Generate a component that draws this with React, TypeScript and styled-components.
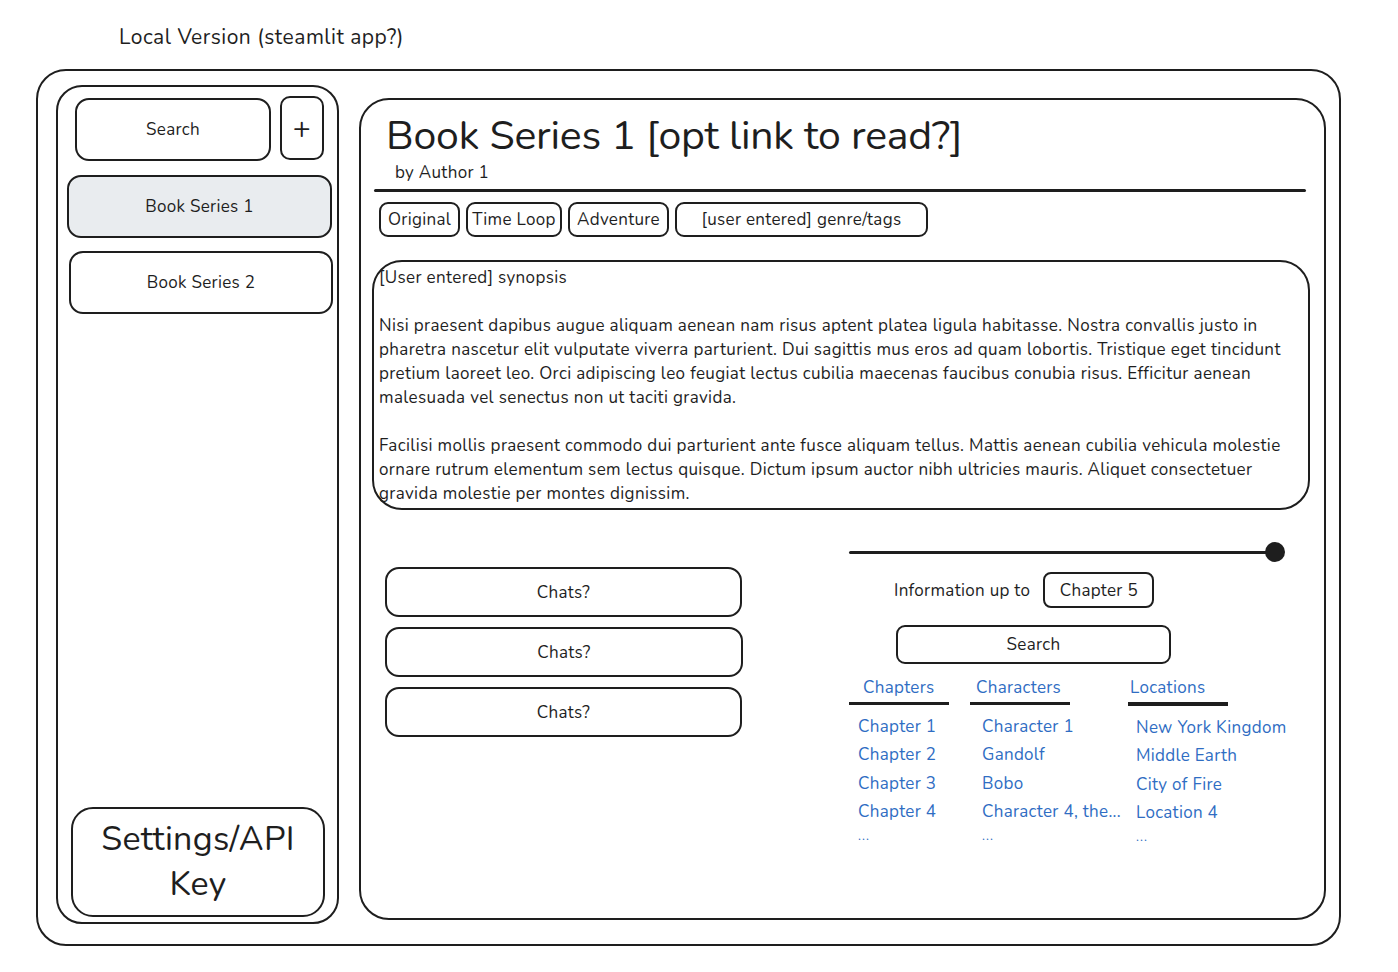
import React from "react";
import styled, { createGlobalStyle } from "styled-components";

const FONT = `"Nunito", "Noto Sans", "Open Sans", sans-serif`;
const INK = "#1e1e1e";
const BLUE = "#2f6dc3";

const Global = createGlobalStyle`
  html, body { margin: 0; padding: 0; background: #ffffff; }
  body { font-family: ${FONT}; color: ${INK}; letter-spacing: 0.3px; }
  * { box-sizing: border-box; }
`;

const Page = styled.div`
  width: 1398px;
  height: 972px;
  padding: 22px 0 0 36px;
  display: flex;
  flex-direction: column;
`;

const PageTitle = styled.div`
  margin-left: 83px;
  font-size: 21px;
  line-height: 30px;
  letter-spacing: 0.5px;
`;

const Frame = styled.div`
  margin-top: 17px;
  width: 1305px;
  height: 877px;
  border: 2px solid ${INK};
  border-radius: 30px;
  display: flex;
  align-items: flex-start;
`;

const Sidebar = styled.div`
  margin: 14px 0 0 18px;
  width: 283px;
  height: 839px;
  border: 2px solid ${INK};
  border-radius: 26px;
  display: flex;
  flex-direction: column;
  padding: 9px 0 5px 0;
`;

const SearchRow = styled.div`
  display: flex;
  align-items: flex-start;
  gap: 9px;
  margin-left: 17px;
`;

const Btn = styled.div<{ $w: number; $h: number; $fill?: boolean; $size?: number; $r?: number }>`
  width: ${(p) => p.$w}px;
  height: ${(p) => p.$h}px;
  border: 2px solid ${INK};
  border-radius: ${(p) => p.$r ?? 14}px;
  background: ${(p) => (p.$fill ? "#e9ecef" : "#fff")};
  display: flex;
  align-items: center;
  justify-content: center;
  text-align: center;
  font-size: ${(p) => p.$size ?? 17}px;
  flex-shrink: 0;
`;

const SearchBtn = styled(Btn)`
  margin-top: 2px;
`;

const SideItem = styled(Btn)<{ $ml: number; $mt: number }>`
  margin-left: ${(p) => p.$ml}px;
  margin-top: ${(p) => p.$mt}px;
`;

const SettingsBtn = styled(Btn)`
  margin: auto 0 0 13px;
  line-height: 45px;
  border-radius: 22px;
`;

const Main = styled.div`
  margin: 27px 0 0 20px;
  width: 967px;
  height: 822px;
  border: 2px solid ${INK};
  border-radius: 30px;
  display: flex;
  flex-direction: column;
  padding-top: 12px;
`;

const Title = styled.h1`
  margin: 0 0 0 25px;
  font-weight: 400;
  font-size: 41px;
  line-height: 48px;
  letter-spacing: -0.2px;
`;

const Author = styled.div`
  margin: 1px 0 0 34px;
  font-size: 17px;
  line-height: 24px;
`;

const Divider = styled.div`
  margin: 4px 0 0 13px;
  width: 932px;
  height: 3px;
  background: ${INK};
  border-radius: 2px;
`;

const Tags = styled.div`
  display: flex;
  gap: 6px;
  margin: 10px 0 0 18px;
  align-items: flex-start;
`;

const Tag = styled.div<{ $w: number }>`
  width: ${(p) => p.$w}px;
  height: 35px;
  border: 2px solid ${INK};
  border-radius: 9px;
  display: flex;
  align-items: center;
  justify-content: center;
  font-size: 17px;
  white-space: nowrap;
`;

const Synopsis = styled.div`
  margin: 23px 0 0 11px;
  width: 938px;
  height: 250px;
  border: 2px solid ${INK};
  border-radius: 30px;
  padding: 4px 0 0 5px;
  font-size: 17px;
  line-height: 24px;
  letter-spacing: 0.36px;
`;

const Line = styled.div`
  white-space: nowrap;
  min-height: 24px;
`;

const Lower = styled.div`
  display: flex;
  align-items: flex-start;
  margin-top: 32px;
`;

const Chats = styled.div`
  margin: 25px 0 0 24px;
  display: flex;
  flex-direction: column;
  gap: 10px;
`;

const Info = styled.div`
  margin-left: 106px;
  display: flex;
  flex-direction: column;
  width: 450px;
`;

const Slider = styled.div`
  position: relative;
  width: 426px;
  height: 20px;
  display: flex;
  align-items: center;
`;

const Track = styled.div`
  width: 100%;
  height: 3px;
  background: ${INK};
  border-radius: 2px;
`;

const Knob = styled.div`
  position: absolute;
  right: -10px;
  top: 0;
  width: 20px;
  height: 20px;
  border-radius: 50%;
  background: ${INK};
`;

const UpTo = styled.div`
  display: flex;
  align-items: center;
  margin: 10px 0 0 45px;
  font-size: 17px;
  gap: 13px;
`;

const SearchWide = styled(Btn)`
  margin: 17px 0 0 47px;
  border-radius: 9px;
`;

const Cols = styled.div`
  display: flex;
  margin-top: 12px;
`;

const Col = styled.div<{ $w: number }>`
  width: ${(p) => p.$w}px;
  display: flex;
  flex-direction: column;
`;

const ColHead = styled.div<{ $pl: number; $thick?: boolean }>`
  color: ${BLUE};
  font-size: 17px;
  line-height: 24px;
  padding-left: ${(p) => p.$pl}px;
  width: 100px;
  border-bottom: ${(p) => (p.$thick ? 4 : 3)}px solid ${INK};
  padding-bottom: 2px;
`;

const ColList = styled.div<{ $pl: number }>`
  display: flex;
  flex-direction: column;
  padding: 8px 0 0 ${(p) => p.$pl}px;
`;

const Item = styled.div`
  color: ${BLUE};
  font-size: 17px;
  line-height: 28.4px;
  white-space: nowrap;
`;

const Dots = styled(Item)`
  font-size: 13px;
  line-height: 18px;
  letter-spacing: 1px;
`;

const synopsis = [
  "[User entered] synopsis",
  "",
  "Nisi praesent dapibus augue aliquam aenean nam risus aptent platea ligula habitasse. Nostra convallis justo in",
  "pharetra nascetur elit vulputate viverra parturient. Dui sagittis mus eros ad quam lobortis. Tristique eget tincidunt",
  "pretium laoreet leo. Orci adipiscing leo feugiat lectus cubilia maecenas faucibus conubia risus. Efficitur aenean",
  "malesuada vel senectus non ut taciti gravida.",
  "",
  "Facilisi mollis praesent commodo dui parturient ante fusce aliquam tellus. Mattis aenean cubilia vehicula molestie",
  "ornare rutrum elementum sem lectus quisque. Dictum ipsum auctor nibh ultricies mauris. Aliquet consectetuer",
  "gravida molestie per montes dignissim.",
];

const columns = [
  { head: "Chapters", w: 121, hp: 14, lp: 9, thick: false, items: ["Chapter 1", "Chapter 2", "Chapter 3", "Chapter 4"] },
  { head: "Characters", w: 158, hp: 6, lp: 12, thick: false, items: ["Character 1", "Gandolf", "Bobo", "Character 4, the..."] },
  { head: "Locations", w: 170, hp: 2, lp: 8, thick: true, items: ["New York Kingdom", "Middle Earth", "City of Fire", "Location 4"] },
];

export default function App() {
  return (
    <Page>
      <Global />
      <PageTitle>Local Version (steamlit app?)</PageTitle>
      <Frame>
        <Sidebar>
          <SearchRow>
            <SearchBtn $w={196} $h={63}>Search</SearchBtn>
            <Btn $w={44} $h={64} $size={30} $r={10}>+</Btn>
          </SearchRow>
          <SideItem $w={265} $h={63} $fill $ml={9} $mt={14}>Book Series 1</SideItem>
          <SideItem $w={264} $h={63} $ml={11} $mt={13}>Book Series 2</SideItem>
          <SettingsBtn $w={254} $h={110} $size={34}>Settings/API<br />Key</SettingsBtn>
        </Sidebar>
        <Main>
          <Title>Book Series 1 [opt link to read?]</Title>
          <Author>by Author 1</Author>
          <Divider />
          <Tags>
            <Tag $w={81}>Original</Tag>
            <Tag $w={96}>Time Loop</Tag>
            <Tag $w={101}>Adventure</Tag>
            <Tag $w={253}>[user entered] genre/tags</Tag>
          </Tags>
          <Synopsis>
            {synopsis.map((l, i) => (
              <Line key={i}>{l}</Line>
            ))}
          </Synopsis>
          <Lower>
            <Chats>
              <Btn $w={357} $h={50}>Chats?</Btn>
              <Btn $w={358} $h={50}>Chats?</Btn>
              <Btn $w={357} $h={50}>Chats?</Btn>
            </Chats>
            <Info>
              <Slider>
                <Track />
                <Knob />
              </Slider>
              <UpTo>
                Information up to
                <Btn $w={111} $h={36} $r={8}>Chapter 5</Btn>
              </UpTo>
              <SearchWide $w={275} $h={39}>Search</SearchWide>
              <Cols>
                {columns.map((c) => (
                  <Col key={c.head} $w={c.w}>
                    <ColHead $pl={c.hp} $thick={c.thick}>{c.head}</ColHead>
                    <ColList $pl={c.lp}>
                      {c.items.map((it) => (
                        <Item key={it}>{it}</Item>
                      ))}
                      <Dots>...</Dots>
                    </ColList>
                  </Col>
                ))}
              </Cols>
            </Info>
          </Lower>
        </Main>
      </Frame>
    </Page>
  );
}
